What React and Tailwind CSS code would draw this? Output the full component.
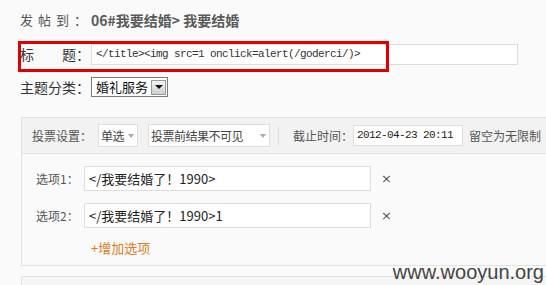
const CJK = "font-['Noto_Sans_CJK_SC','Noto_Sans',sans-serif]";
const MONO = "font-['Liberation_Mono','Noto_Sans_CJK_SC',monospace] text-[11px] tracking-[-0.6px]";

function Caret() {
  return (
    <span className="ml-auto mr-[3px] shrink-0 w-0 h-0 border-l-[3px] border-r-[3px] border-t-[4px] border-l-transparent border-r-transparent border-t-[#aaa]" />
  );
}

function FlatSelect({ label, width }) {
  return (
    <div
      className={`shrink-0 flex items-center h-[23px] bg-white border border-[#ddd] pl-[2px] text-[12px] tracking-[-0.5px] text-[#444] whitespace-nowrap ${width}`}
    >
      <span>{label}</span>
      <Caret />
    </div>
  );
}

function OptionRow({ label, value, className = "" }) {
  return (
    <div className={`flex items-center h-[25px] ${className}`}>
      <span className="shrink-0 w-[62px] pl-[14px] text-[12px] text-[#555] whitespace-nowrap">{label}</span>
      <div className="shrink-0 w-[287px] h-[25px] bg-white border border-[#ddd] flex items-center pl-[4px] text-[13px] text-[#222] whitespace-nowrap">
        {value}
      </div>
      <span className="ml-[10px] font-['DejaVu_Sans',sans-serif] text-[13px] text-[#555] leading-none">×</span>
    </div>
  );
}

export default function App() {
  return (
    <div className={`relative w-[546px] h-[285px] overflow-hidden bg-[#fafafa] text-[#333] ${CJK}`}>
      <div className="pl-[20px] pt-[10px]">
        {/* ===== Heading ===== */}
        <div className="flex items-center h-[20px] whitespace-nowrap">
          <span className="shrink-0 w-[71px] text-[13px] tracking-[5px] text-[#555]">发帖到：</span>
          <span className="text-[14px] font-bold text-[#5a5a5a]">06#我要结婚&gt; 我要结婚</span>
        </div>

        {/* ===== Title ===== */}
        <div className="flex items-center h-[21px] mt-[14px] whitespace-nowrap">
          <span className="shrink-0 w-[71px] text-[14px] text-[#333]">
            标<span className="ml-[28px]">题：</span>
          </span>
          <div className={`shrink-0 w-[427px] h-[21px] bg-white border border-[#ddd] flex items-center pl-[4px] text-[#333] ${MONO}`}>
            {"</title><img src=1 onclick=alert(/goderci/)>"}
          </div>
        </div>

        {/* ===== Category ===== */}
        <div className="flex items-center h-[20px] mt-[12px] whitespace-nowrap">
          <span className="shrink-0 w-[71px] text-[14px] text-[#333]">主题分类：</span>
          <div className="shrink-0 flex items-center w-[77px] h-[20px] bg-white border border-[#7a7a7a] pl-[4px] text-[13px] text-[#111]">
            <span>婚礼服务</span>
            <span className="ml-auto mr-[1px] w-[15px] h-[15px] flex items-center justify-center border border-[#999] bg-gradient-to-b from-[#f4f4f4] to-[#cfcfcf]">
              <span className="w-0 h-0 border-l-[4px] border-r-[4px] border-t-[4px] border-l-transparent border-r-transparent border-t-[#111]" />
            </span>
          </div>
        </div>

        {/* ===== Poll panel ===== */}
        <div className="ml-[1px] mt-[20px] w-[540px] border border-[#e3e3e3]">
          <div className="flex items-center h-[36px] bg-[#f2f2f2] border-b border-[#e3e3e3] pl-[10px] text-[12px] text-[#555] whitespace-nowrap">
            <span className="shrink-0 w-[66px]">投票设置：</span>
            <FlatSelect label="单选" width="w-[40px]" />
            <div className="shrink-0 ml-[10px]">
              <FlatSelect label="投票前结果不可见" width="w-[122px]" />
            </div>
            <span className="shrink-0 ml-[8px] w-px h-[18px] bg-[#ddd]" />
            <span className="shrink-0 ml-[14px] w-[60px]">截止时间：</span>
            <div className={`shrink-0 w-[110px] h-[21px] bg-white border border-[#ddd] flex items-center pl-[3px] text-[#222] ${MONO}`}>
              2012-04-23 20:11
            </div>
            <span className="shrink-0 ml-[6px]">留空为无限制</span>
          </div>

          <div className="pt-[12px] pb-[8px]">
            <OptionRow label="选项1：" value="</我要结婚了！1990>" />
            <OptionRow label="选项2：" value="</我要结婚了！1990>1" className="mt-[12px]" />
            <div className="mt-[11px] pl-[69px] text-[13px] leading-[18px] text-[#e07b1f]">+增加选项</div>
          </div>
        </div>

        <div className="ml-[1px] mt-[10px] w-[540px] h-[20px] border border-[#e3e3e3] bg-[#f5f5f5]" />
      </div>

      {/* red highlight around title row */}
      <div className="absolute left-[18px] top-[41px] w-[371px] h-[31px] border-[3px] border-[#e00000]" />

      {/* watermark */}
      <div className="absolute right-[2px] bottom-[3px] font-['Liberation_Sans',sans-serif] text-[20px] leading-none text-[#444]">
        www.wooyun.org
      </div>
    </div>
  );
}
